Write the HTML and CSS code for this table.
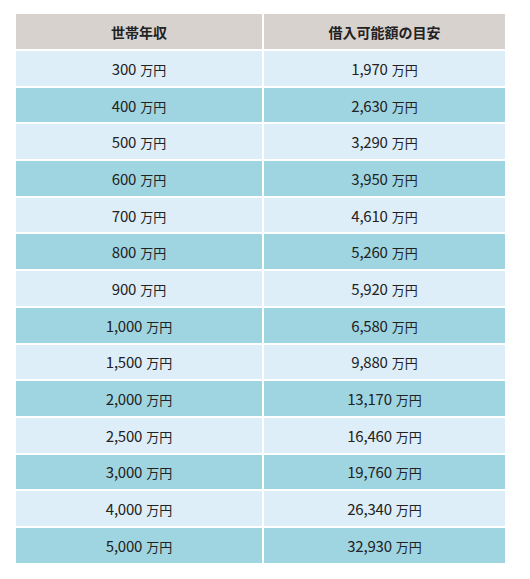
FILE: index.html
```html
<!DOCTYPE html>
<html lang="ja">
<head>
<meta charset="utf-8">
<title>世帯年収と借入可能額の目安</title>
<link rel="stylesheet" href="styles.css">
</head>
<body>
<div class="wrap">
<table class="loan">
  <thead>
    <tr><th class="c1">世帯年収</th><th class="c2">借入可能額の目安</th></tr>
  </thead>
  <tbody>
    <tr class="light"><td>300<span class="u">万円</span></td><td>1,970<span class="u">万円</span></td></tr>
    <tr class="dark"><td>400<span class="u">万円</span></td><td>2,630<span class="u">万円</span></td></tr>
    <tr class="light"><td>500<span class="u">万円</span></td><td>3,290<span class="u">万円</span></td></tr>
    <tr class="dark"><td>600<span class="u">万円</span></td><td>3,950<span class="u">万円</span></td></tr>
    <tr class="light"><td>700<span class="u">万円</span></td><td>4,610<span class="u">万円</span></td></tr>
    <tr class="dark"><td>800<span class="u">万円</span></td><td>5,260<span class="u">万円</span></td></tr>
    <tr class="light"><td>900<span class="u">万円</span></td><td>5,920<span class="u">万円</span></td></tr>
    <tr class="dark"><td>1,000<span class="u">万円</span></td><td>6,580<span class="u">万円</span></td></tr>
    <tr class="light"><td>1,500<span class="u">万円</span></td><td>9,880<span class="u">万円</span></td></tr>
    <tr class="dark"><td>2,000<span class="u">万円</span></td><td>13,170<span class="u">万円</span></td></tr>
    <tr class="light"><td>2,500<span class="u">万円</span></td><td>16,460<span class="u">万円</span></td></tr>
    <tr class="dark"><td>3,000<span class="u">万円</span></td><td>19,760<span class="u">万円</span></td></tr>
    <tr class="light"><td>4,000<span class="u">万円</span></td><td>26,340<span class="u">万円</span></td></tr>
    <tr class="dark"><td>5,000<span class="u">万円</span></td><td>32,930<span class="u">万円</span></td></tr>
  </tbody>
</table>
</div>
</body>
</html>
```

FILE: styles.css
```css
html, body {
  margin: 0;
  padding: 0;
  background: #ffffff;
}
.wrap {
  padding: 12px 14px;
}
.loan {
  border-collapse: separate;
  border-spacing: 2px;
  table-layout: fixed;
  width: 493px;
  font-family: "Noto Sans CJK JP", "Noto Sans", sans-serif;
  color: #222222;
}
.loan th,
.loan td {
  padding: 0;
  text-align: center;
  vertical-align: middle;
  line-height: 1;
}
.loan th {
  background: #d8d2cf;
  height: 35px;
  font-size: 14px;
  font-weight: 700;
}
.loan .c1 { width: 246px; }
.loan .c2 { width: 241px; }
.loan td {
  height: 34.7px;
  font-size: 15px;
  font-weight: 400;
  letter-spacing: -0.2px;
}
.loan .light td { background: #ddeef8; }
.loan .dark td { background: #9fd5e1; }
.loan .u {
  margin-left: 4px;
  font-size: 13px;
  letter-spacing: 0;
}
```
